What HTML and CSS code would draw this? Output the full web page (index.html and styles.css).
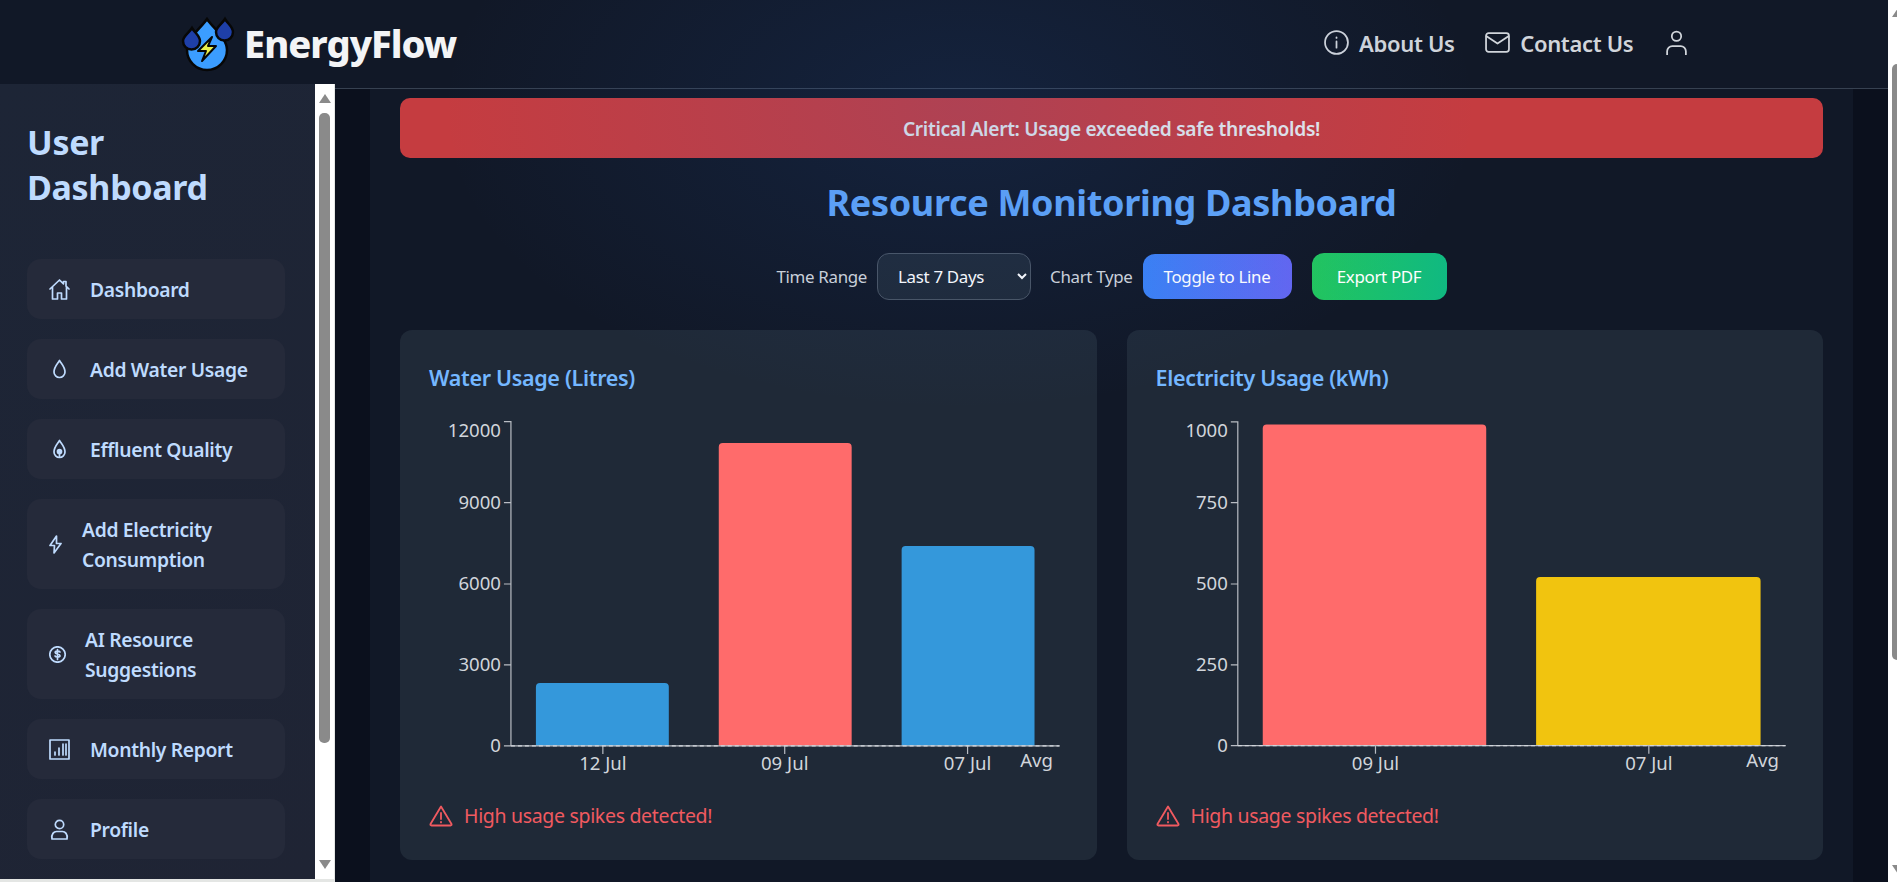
FILE: index.html
```html
<!DOCTYPE html>
<html lang="en">

<head>
  <meta charset="UTF-8">
  <meta name="viewport" content="width=device-width, initial-scale=1.0">
  <title>EnergyFlow | Resource Monitoring</title>
  <link rel="stylesheet" href="styles.css">
</head>

<body>
  <div class="page">
    <div class="app">
      <header class="topbar">
        <svg class="logo" viewBox="0 0 70 65">
          <path class="logo-main" d="M32 9C26 18 12 28 12 40a20 20 0 0 0 40 0C52 28 38 18 32 9Z" />
          <path class="logo-small" d="M17 18C14 23 8 26 8 31a8.500 8.500 0 0 0 17 0C25 26 20 23 17 18Z" />
          <path class="logo-small" d="M50 9C47 14 41 17 41 22a8.500 8.500 0 0 0 17 0C58 17 53 14 50 9Z" />
          <path class="logo-bolt" d="M37 27 23 41h8l-4 10 14-15h-8Z" />
        </svg>
        <span class="brand">EnergyFlow</span>
        <nav class="topnav">
          <a class="topnav-link">
            <svg class="ico top-ico" viewBox="0 0 24 24"><circle cx="12" cy="12" r="11" /><path d="M12 11v6M12 7v.6" /></svg>
            About Us
          </a>
          <a class="topnav-link">
            <svg class="ico top-ico" viewBox="0 0 24 24"><rect x="1" y="3" width="22" height="18" rx="2.500" /><path d="m1.500 6 10.500 7 10.500-7" /></svg>
            Contact Us
          </a>
          <a class="topnav-link">
            <svg class="ico top-ico" viewBox="0 0 24 24"><circle cx="12" cy="6" r="4.500" /><path d="M3 24v-3.500a5 5 0 0 1 5-5h8a5 5 0 0 1 5 5V24" /></svg>
          </a>
        </nav>
      </header>

      <div class="layout">
        <div class="sidebar-wrap">
          <aside class="sidebar">
            <h2 class="sidebar-title">User Dashboard</h2>
            <ul class="side-menu">
              <li class="side-item">
                <svg class="ico side-ico" viewBox="0 0 21 21"><path d="M1 10 10.500 1 14.500 4.800V2.500h2.500v4.600L20 10M3.500 8v12h5v-6h4v6h5V8" /></svg>
                Dashboard
              </li>
              <li class="side-item">
                <svg class="ico side-ico" viewBox="0 0 21 21"><path d="M10.500 1.500C8.500 5 5 8 5 13a5.500 5.500 0 0 0 11 0c0-5-3.500-8-5.500-11.500Z" /></svg>
                Add Water Usage
              </li>
              <li class="side-item">
                <svg class="ico side-ico" viewBox="0 0 21 21"><path d="M10.500 1.500C8.500 5 5 8 5 13a5.500 5.500 0 0 0 11 0c0-5-3.500-8-5.500-11.500Z" /><circle class="ico-dot" cx="10.500" cy="12.500" r="2" /><path d="M10.500 14v4" /></svg>
                Effluent Quality
              </li>
              <li class="side-item">
                <svg class="ico side-ico ico-bolt" viewBox="0 0 13 21"><path d="M7.500 2 1 11.500h4.500L5 19l7-9.500H7.500Z" /></svg>
                Add Electricity Consumption
              </li>
              <li class="side-item">
                <svg class="ico side-ico ico-coin" viewBox="0 0 17 17"><circle cx="8.500" cy="8.500" r="7.700" /><path d="M11 6c-.500-1.200-4.800-1.500-4.800.4 0 2.100 4.800 1 4.800 3.300 0 1.800-4.500 1.600-5 .300M8.500 3.500v10" /></svg>
                AI Resource Suggestions
              </li>
              <li class="side-item">
                <svg class="ico side-ico" viewBox="0 0 21 21"><rect x="1" y="1" width="19" height="19" /><path d="M6 16v-3M10 16V9M14 16V5M17 16V5" /></svg>
                Monthly Report
              </li>
              <li class="side-item">
                <svg class="ico side-ico" viewBox="0 0 21 21"><circle cx="10.500" cy="5.500" r="4.200" /><path d="M3 20c-1-5 2-7.500 4.500-7.500h6C16 12.500 19 15 18 20Z" /></svg>
                Profile
              </li>
            </ul>
          </aside>
          <div class="scrollbar side-scroll">
            <span class="arrow-up"></span>
            <span class="thumb"></span>
            <span class="arrow-down"></span>
          </div>
        </div>

        <main class="main">
          <div class="panel">
            <div class="alert">Critical Alert: Usage exceeded safe thresholds!</div>
            <h1 class="page-title">Resource Monitoring Dashboard</h1>

            <div class="controls">
              <label class="ctl-label">Time Range</label>
              <select class="range-select">
                <option>Last 7 Days</option>
              </select>
              <label class="ctl-label">Chart Type</label>
              <button class="btn btn-blue">Toggle to Line</button>
              <button class="btn btn-green">Export PDF</button>
            </div>

            <div class="charts">
              <section class="card">
                <h3 class="card-title">Water Usage (Litres)</h3>
                <svg class="chart" viewBox="429 400 639 390">
                  <path class="bar-blue" d="M536 746V687q0-4 4-4H665q4 0 4 4V746Z" />
                  <path class="bar-red" d="M719 746V447q0-4 4-4H848q4 0 4 4V746Z" />
                  <path class="bar-blue" d="M902 746V550q0-4 4-4H1031q4 0 4 4V746Z" />
                  <path class="axis" d="M504 421.500H511V746M504 502.500H511M504 584H511M504 665H511M504 746H1060M603 746v8M785 746v8M968 746v8" />
                  <path class="avg-line" d="M511 746H1060" />
                  <text class="tick tick-y" x="501" y="437">12000</text>
                  <text class="tick tick-y" x="501" y="509">9000</text>
                  <text class="tick tick-y" x="501" y="590">6000</text>
                  <text class="tick tick-y" x="501" y="671">3000</text>
                  <text class="tick tick-y" x="501" y="752">0</text>
                  <text class="tick tick-x" x="603" y="770">12 Jul</text>
                  <text class="tick tick-x" x="785" y="770">09 Jul</text>
                  <text class="tick tick-x" x="968" y="770">07 Jul</text>
                  <text class="tick tick-x" x="1037" y="767">Avg</text>
                </svg>
                <p class="warn">
                  <svg class="ico warn-ico" viewBox="0 0 24 22"><path d="M12 1.500 1.500 19q-.500 1.500 1 1.500h19q1.500 0 1-1.500Z" /><path d="M12 8v6M12 16.800v.6" /></svg>
                  High usage spikes detected!
                </p>
              </section>

              <section class="card">
                <h3 class="card-title">Electricity Usage (kWh)</h3>
                <svg class="chart" viewBox="1155 400 640 390">
                  <path class="bar-red" d="M1262 746V428q0-4 4-4H1482q4 0 4 4V746Z" />
                  <path class="bar-yellow" d="M1536 746V581q0-4 4-4H1757q4 0 4 4V746Z" />
                  <path class="axis" d="M1230 421.500H1237V746M1230 502.500H1237M1230 584H1237M1230 665H1237M1230 746H1786M1375 746v8M1649 746v8" />
                  <path class="avg-line" d="M1237 746H1786" />
                  <text class="tick tick-y" x="1227" y="437">1000</text>
                  <text class="tick tick-y" x="1227" y="509">750</text>
                  <text class="tick tick-y" x="1227" y="590">500</text>
                  <text class="tick tick-y" x="1227" y="671">250</text>
                  <text class="tick tick-y" x="1227" y="752">0</text>
                  <text class="tick tick-x" x="1375" y="770">09 Jul</text>
                  <text class="tick tick-x" x="1649" y="770">07 Jul</text>
                  <text class="tick tick-x" x="1763" y="767">Avg</text>
                </svg>
                <p class="warn">
                  <svg class="ico warn-ico" viewBox="0 0 24 22"><path d="M12 1.500 1.500 19q-.500 1.500 1 1.500h19q1.500 0 1-1.500Z" /><path d="M12 8v6M12 16.800v.6" /></svg>
                  High usage spikes detected!
                </p>
              </section>
            </div>
          </div>
        </main>
      </div>
      <div class="glow"></div>
    </div>

    <div class="scrollbar page-scroll">
      <span class="arrow-up"></span>
      <span class="thumb"></span>
      <span class="arrow-down"></span>
    </div>
  </div>
</body>

</html>
```

FILE: styles.css
```css
* {
  box-sizing: border-box;
}

html,
body {
  margin: 0;
  padding: 0;
  height: 882px;
  overflow: hidden;
  background: #0f1524;
  font-family: "Noto Sans", "Open Sans", sans-serif;
  letter-spacing: -0.02em;
}

.page {
  display: flex;
  width: 1907px;
  height: 882px;
}

.app {
  position: relative;
  flex: 0 0 1888px;
  display: flex;
  flex-direction: column;
  height: 882px;
  overflow: hidden;
}

/* top bar */
.topbar {
  display: flex;
  align-items: center;
  flex: 0 0 89px;
  padding: 0 199px 3px 175px;
  background: #111827;
  border-bottom: 1px solid #374151;
}

.logo {
  width: 70px;
  height: 65px;
  margin-right: -1px;
}

.logo-main {
  fill: #3b9dff;
  stroke: #070707;
  stroke-width: 2.5;
}

.logo-small {
  fill: #1e3fa8;
  stroke: #070707;
  stroke-width: 2.5;
}

.logo-bolt {
  fill: #e9f04b;
  stroke: #070707;
  stroke-width: 2;
  stroke-linejoin: round;
}

.brand {
  font-size: 38px;
  font-weight: 800;
  color: #f3f4f6;
  letter-spacing: -0.025em;
}

.topnav {
  display: flex;
  align-items: center;
  gap: 30.600px;
  margin-left: auto;
  color: #d1d5db;
}

.topnav-link {
  display: flex;
  align-items: center;
  gap: 10px;
  font-size: 22px;
  font-weight: 600;
}

.ico {
  fill: none;
  stroke: currentColor;
  stroke-width: 1.7;
  stroke-linecap: round;
  stroke-linejoin: round;
  flex-shrink: 0;
}

.top-ico {
  width: 25px;
  height: 25px;
}

/* body columns */
.layout {
  display: flex;
  flex: 1;
  min-height: 0;
}

.sidebar-wrap {
  position: relative;
  z-index: 2;
  display: flex;
  flex: 0 0 335px;
  height: 798px;
  margin-top: -5px;
  padding-bottom: 3px;
  background: #e4e6e4;
}

.sidebar {
  flex: 0 0 315px;
  padding: 36px 30px 0 27px;
  overflow: hidden;
  background: linear-gradient(135deg, #1d2536, #1f2434);
}

.sidebar-title {
  margin: 0 0 49px;
  font-size: 34px;
  line-height: 45px;
  font-weight: 700;
  color: #bfdbfe;
  width: 200px;
}

.side-menu {
  display: flex;
  flex-direction: column;
  gap: 20px;
  margin: 0;
  padding: 0;
  list-style: none;
}

.side-item {
  display: flex;
  align-items: center;
  gap: 20px;
  padding: 16px 22px 14px;
  border-radius: 14px;
  background: #252a3a;
  color: #bfdbfe;
  font-size: 19.300px;
  line-height: 30px;
  font-weight: 600;
}

.side-ico {
  width: 21px;
  height: 21px;
  margin-top: -2px;
}

.ico-bolt {
  width: 13px;
}

.ico-coin {
  width: 17px;
  height: 17px;
  margin-right: -1px;
}

.ico-dot {
  fill: currentColor;
}

/* fake scrollbars */
.scrollbar {
  display: flex;
  flex-direction: column;
  align-items: center;
  flex: 0 0 19px;
  background: #fff;
}

.side-scroll {
  margin-right: 1px;
  padding-top: 10px;
}

.page-scroll {
  padding-top: 8px;
}

.arrow-up,
.arrow-down {
  width: 0;
  height: 0;
  border-left: 6.500px solid transparent;
  border-right: 6.500px solid transparent;
}

.arrow-up {
  border-bottom: 9px solid #8a8a8a;
}

.arrow-down {
  border-top: 9px solid #8a8a8a;
}

.thumb {
  width: 11px;
  border-radius: 5px;
  background: #8a8a8a;
}

.side-scroll .thumb {
  height: 630px;
  margin: 10px 0 117px;
}

.page-scroll .thumb {
  height: 596px;
  margin: 47px 0 205px;
}

/* main column */
.main {
  flex: 1;
  min-width: 0;
  padding: 0 35px;
  overflow: hidden;
  background: #0b101d;
}

.panel {
  height: 100%;
  padding: 9px 30px 0;
  background: #111827;
}

.alert {
  display: flex;
  align-items: center;
  justify-content: center;
  height: 60px;
  border-radius: 10px;
  background: #c53c40;
  color: #e5e7eb;
  font-size: 19.200px;
  font-weight: 600;
}

.page-title {
  margin: 21px 0 26px;
  text-align: center;
  font-size: 36px;
  line-height: 48px;
  font-weight: 700;
  color: #60a5fa;
}

.controls {
  display: flex;
  align-items: center;
  justify-content: center;
  height: 47px;
  margin-bottom: 30px;
  color: #d1d5db;
  font-size: 16.900px;
}

.ctl-label {
  margin-right: 10px;
}

.range-select {
  width: 154px;
  height: 47px;
  margin-right: 19px;
  padding: 0 16px;
  border: 1px solid #4b5563;
  border-radius: 12px;
  background: #1f2937;
  color: #fff;
  color-scheme: dark;
  font-family: inherit;
  font-size: 16.900px;
  letter-spacing: inherit;
}

.btn {
  border: 0;
  border-radius: 12px;
  color: #fff;
  font-family: inherit;
  font-size: 16.900px;
  letter-spacing: inherit;
}

.btn-blue {
  width: 149px;
  height: 45px;
  margin-right: 20px;
  background: linear-gradient(90deg, #3b82f6, #6366f1);
}

.btn-green {
  width: 135px;
  height: 47px;
  background: linear-gradient(90deg, #22c55e, #10b981);
}

.charts {
  display: grid;
  grid-template-columns: 1fr 1fr;
  gap: 30px;
}

.card {
  height: 530px;
  padding: 34px 29px 0;
  border-radius: 12px;
  background: #1f2937;
}

.card-title {
  margin: 0;
  font-size: 21.500px;
  line-height: 28px;
  font-weight: 600;
  color: #74b7ff;
}

.chart {
  display: block;
  width: 100%;
  height: 390px;
  margin-top: 8px;
}

.bar-blue {
  fill: #3498db;
}

.bar-red {
  fill: #ff6b6b;
}

.bar-yellow {
  fill: #f1c40f;
}

.axis {
  fill: none;
  stroke: #b9bdc4;
  stroke-width: 1.2;
}

.avg-line {
  fill: none;
  stroke: #d1d5db;
  stroke-width: 1.1;
  stroke-dasharray: 4 3;
}

.tick {
  fill: #d1d5db;
  font-size: 18.600px;
  letter-spacing: 0;
}

.tick-y {
  text-anchor: end;
}

.tick-x {
  text-anchor: middle;
}

.warn {
  display: flex;
  align-items: center;
  gap: 11px;
  margin: 14px 0 0;
  color: #f05a60;
  font-size: 19.500px;
  line-height: 24px;
}

.warn-ico {
  width: 24px;
  height: 22px;
  stroke-width: 1.8;
}

/* soft light behind the heading, sits over header and panel */
.glow {
  position: absolute;
  inset: 0;
  pointer-events: none;
  background: radial-gradient(ellipse 520px 300px at 960px 110px, rgba(40, 100, 200, 0.14), rgba(40, 100, 200, 0));
}
```
